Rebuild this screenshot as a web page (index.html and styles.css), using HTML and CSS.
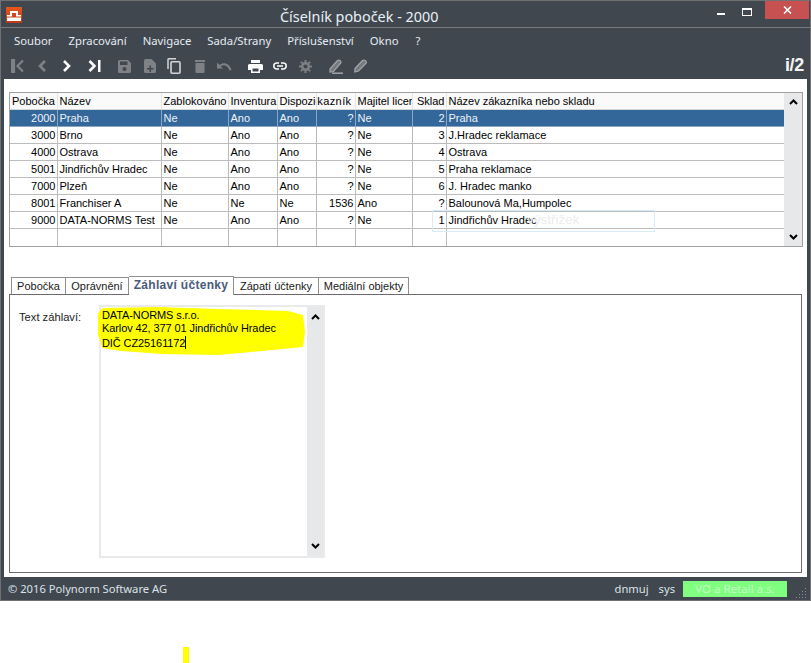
FILE: index.html
```html
<!DOCTYPE html>
<html lang="cs">
<head>
    <meta charset="UTF-8">
    <title>Číselník poboček - 2000</title>
    <link rel="stylesheet" href="styles.css">
</head>
<body>
    <div class="window">
        <div class="titlebar">
            <svg class="app-logo" width="16" height="16" viewBox="0 0 16 16">
                <defs>
                    <linearGradient id="logoFill" x1="0" y1="0" x2="0" y2="1">
                        <stop offset="0" stop-color="#e8561a"/>
                        <stop offset="1" stop-color="#b93c1a"/>
                    </linearGradient>
                </defs>
                <rect width="16" height="16" fill="url(#logoFill)"/>
                <path d="M4 4h8v4h3v1.500H10V6H6v3.500H1V8h3zM1 10.500h14V14H1z" fill="#fff"/>
            </svg>
            <div class="title">Číselník poboček - 2000</div>
            <div class="win-controls">
                <span class="win-min"></span>
                <span class="win-max"></span>
                <span class="win-close">
                    <svg width="9" height="8" viewBox="0 0 9 8"><path d="M1 0.500l7 7M8 0.500l-7 7" stroke="#fff" stroke-width="1.600"/></svg>
                </span>
            </div>
        </div>

        <div class="menubar">
            <span>Soubor</span>
            <span>Zpracování</span>
            <span>Navigace</span>
            <span>Sada/Strany</span>
            <span>Příslušenství</span>
            <span>Okno</span>
            <span class="menu-help">?</span>
        </div>

        <div class="toolbar">
            <svg class="tb-first" width="14" height="14" viewBox="0 0 14 14"><path d="M1 1h2v12H1zM12 1.500L6.500 7l5.500 5.500" fill="none" stroke="#7e8286" stroke-width="2.200"/></svg>
            <svg class="tb-prev" width="10" height="14" viewBox="0 0 10 14"><path d="M8 2L3 7l5 5" fill="none" stroke="#7e8286" stroke-width="2.600"/></svg>
            <svg class="tb-next" width="10" height="14" viewBox="0 0 10 14"><path d="M2 2l5 5-5 5" fill="none" stroke="#fff" stroke-width="2.600"/></svg>
            <svg class="tb-last" width="13" height="14" viewBox="0 0 13 14"><path d="M1.500 2L6.500 7l-5 5" fill="none" stroke="#fff" stroke-width="2.600"/><path d="M10 1h2.500v12H10z" fill="#fff"/></svg>
            <svg class="tb-save" width="13" height="13" viewBox="0 0 13 13"><path d="M0 1.500Q0 0 1.500 0H10l3 3v8.500q0 1.500-1.500 1.500h-10Q0 13 0 11.500zM2 1.500V5h7.500V1.500z" fill="#7e8286"/><circle cx="6.500" cy="9" r="2" fill="#41474e"/></svg>
            <svg class="tb-new" width="12" height="14" viewBox="0 0 12 14"><path d="M1.500 0H7.500L12 4.500v8q0 1.500-1.500 1.500h-9Q0 14 0 12.500V1.500Q0 0 1.500 0z" fill="#7e8286"/><path d="M5.500 6.500h1.500V9h2.500v1.500H7V13H5.500v-2.500H3V9h2.500z" fill="#41474e"/></svg>
            <svg class="tb-copy" width="14" height="16" viewBox="0 0 14 16"><path d="M1 11V1.500Q1 .8 1.700 .8H9" fill="none" stroke="#d3d5d7" stroke-width="1.500"/><rect x="4" y="3.800" width="9" height="11.400" rx="1" fill="none" stroke="#d3d5d7" stroke-width="1.600"/></svg>
            <svg class="tb-del" width="10" height="13" viewBox="0 0 10 13"><path d="M0 0h10v2H0zM.5 3h9v9q0 1-1 1h-7q-1 0-1-1z" fill="#7e8286"/></svg>
            <svg class="tb-undo" width="15" height="9" viewBox="0 0 15 9"><path d="M0 .5v6h6L3.600 4.200C6.500 2.300 10.500 3 12.500 8.500L14.500 8C12.500 1.500 7 -.5 2.400 2.900z" fill="#7e8286"/></svg>
            <svg class="tb-print" width="15" height="13" viewBox="0 0 15 13"><path d="M3 0h9v3H3zM1.500 4h12Q15 4 15 5.500V10h-3v3H3v-3H0V5.500Q0 4 1.500 4zM4.500 8.500v3h6v-3z" fill="#fff"/></svg>
            <svg class="tb-link" width="14" height="8" viewBox="0 0 14 8"><path d="M6 1H3.800a3 3 0 000 6H6M8 1h2.200a3 3 0 010 6H8M4 4h6" fill="none" stroke="#fff" stroke-width="1.500"/></svg>
            <svg class="tb-gear" width="13" height="13" viewBox="0 0 13 13"><circle cx="6.500" cy="6.500" r="3.300" fill="none" stroke="#7e8286" stroke-width="2.400"/><path d="M6.500 0v13M0 6.500h13M1.900 1.900l9.200 9.200M11.100 1.900l-9.200 9.200" stroke="#7e8286" stroke-width="2" stroke-dasharray="2 9"/></svg>
            <svg class="tb-edit1" width="14" height="15" viewBox="0 0 14 15"><path d="M1 10L8.500 1.500q1.200-1 2.500 0t.8 2.500L4.500 12.500 1 13z" fill="#757a7f" stroke="#a3a6a9" stroke-width="1.200"/><path d="M3 14.200h11" stroke="#a3a6a9" stroke-width="1.500"/></svg>
            <svg class="tb-edit2" width="14" height="14" viewBox="0 0 14 14"><path d="M1 9.500L8.500 1.500q1.300-1 2.800 0t.8 2.700L4.500 12 .8 13z" fill="#757a7f" stroke="#a3a6a9" stroke-width="1.200"/></svg>
            <span class="brand">i/2</span>
        </div>

        <div class="content">
            <div class="grid">
                <table class="grid-table">
                    <colgroup>
                        <col class="c-id"><col class="c-name"><col class="c-block"><col class="c-inv"><col class="c-disp"><col class="c-cust"><col class="c-owner"><col class="c-store"><col class="c-store-name">
                    </colgroup>
                    <thead>
                        <tr>
                            <th>Pobočka</th><th>Název</th><th>Zablokováno</th><th>Inventura</th><th>Dispozice</th>
                            <th class="clip-left">Zákazník</th><th>Majitel licence</th><th class="num">Sklad</th><th>Název zákazníka nebo skladu</th>
                        </tr>
                    </thead>
                    <tbody>
                        <tr class="selected"><td class="num">2000</td><td>Praha</td><td>Ne</td><td>Ano</td><td>Ano</td><td class="num">?</td><td>Ne</td><td class="num">2</td><td>Praha</td></tr>
                        <tr><td class="num">3000</td><td>Brno</td><td>Ne</td><td>Ano</td><td>Ano</td><td class="num">?</td><td>Ne</td><td class="num">3</td><td>J.Hradec reklamace</td></tr>
                        <tr><td class="num">4000</td><td>Ostrava</td><td>Ne</td><td>Ano</td><td>Ano</td><td class="num">?</td><td>Ne</td><td class="num">4</td><td>Ostrava</td></tr>
                        <tr><td class="num">5001</td><td>Jindřichův Hradec</td><td>Ne</td><td>Ano</td><td>Ano</td><td class="num">?</td><td>Ne</td><td class="num">5</td><td>Praha reklamace</td></tr>
                        <tr><td class="num">7000</td><td>Plzeň</td><td>Ne</td><td>Ano</td><td>Ano</td><td class="num">?</td><td>Ne</td><td class="num">6</td><td>J. Hradec manko</td></tr>
                        <tr><td class="num">8001</td><td>Franchiser A</td><td>Ne</td><td>Ne</td><td>Ne</td><td class="num">1536</td><td>Ano</td><td class="num">?</td><td>Balounová Ma,Humpolec</td></tr>
                        <tr><td class="num">9000</td><td>DATA-NORMS Test</td><td>Ne</td><td>Ano</td><td>Ano</td><td class="num">?</td><td>Ne</td><td class="num">1</td><td>Jindřichův Hradec</td></tr>
                        <tr class="empty-row"><td>&nbsp;</td><td></td><td></td><td></td><td></td><td></td><td></td><td></td><td></td></tr>
                    </tbody>
                </table>
                <div class="scrollbar grid-scroll">
                    <svg width="9" height="6" viewBox="0 0 9 6"><path d="M1 5l3.500-3.500L8 5" fill="none" stroke="#000" stroke-width="2"/></svg>
                    <svg width="9" height="6" viewBox="0 0 9 6"><path d="M1 1l3.500 3.500L8 1" fill="none" stroke="#000" stroke-width="2"/></svg>
                </div>
                <div class="snip-ghost">výstřižek</div>
            </div>

            <div class="tabs">
                <div class="tab t-branch">Pobočka</div>
                <div class="tab t-rights">Oprávnění</div>
                <div class="tab t-head active">Záhlaví účtenky</div>
                <div class="tab t-foot">Zápatí účtenky</div>
                <div class="tab t-media">Mediální objekty</div>
            </div>
            <div class="panel">
                <div class="field-label">Text záhlaví:</div>
                <div class="memo">
                    <svg class="marker" width="210" height="50" viewBox="0 0 210 50">
                        <path d="M5 1L60 0l60 2 70 2 15 4 2 17-2 15-52 5-33 3-55-1-42-3-19-3-2-9-5-9 1-9 1-7z" fill="#ffff00"/>
                    </svg>
                    <div class="memo-text">DATA-NORMS s.r.o.<br>Karlov 42, 377 01 Jindřichův Hradec<br>DIČ CZ25161172<span class="caret"></span></div>
                    <div class="scrollbar memo-scroll">
                        <svg width="9" height="6" viewBox="0 0 9 6"><path d="M1 5l3.500-3.500L8 5" fill="none" stroke="#000" stroke-width="2"/></svg>
                        <svg width="9" height="6" viewBox="0 0 9 6"><path d="M1 1l3.500 3.500L8 1" fill="none" stroke="#000" stroke-width="2"/></svg>
                    </div>
                </div>
            </div>
        </div>

        <div class="statusbar">
            <span class="copyright">© 2016 Polynorm Software AG</span>
            <span class="user">dnmuj</span>
            <span class="db">sys</span>
            <span class="company">VO a Retail a.s.</span>
            <svg class="grip" width="11" height="11" viewBox="0 0 11 11" fill="#8a8d91"><rect x="9" y="1" width="1" height="1"/><rect x="6" y="4" width="1" height="1"/><rect x="9" y="4" width="1" height="1"/><rect x="3" y="7" width="1" height="1"/><rect x="6" y="7" width="1" height="1"/><rect x="9" y="7" width="1" height="1"/><rect x="0" y="10" width="1" height="1"/><rect x="3" y="10" width="1" height="1"/><rect x="6" y="10" width="1" height="1"/><rect x="9" y="10" width="1" height="1"/></svg>
        </div>
    </div>
    <div class="stray-mark"></div>
</body>
</html>
```

FILE: styles.css
```css
html, body {
    margin: 0;
    padding: 0;
    background: #fff;
}
body {
    width: 811px;
    height: 663px;
    overflow: hidden;
    font-family: "Liberation Sans", Arial, sans-serif;
    font-size: 11px;
    color: #000;
}
svg {
    display: block;
    flex: none;
}
.window {
    box-sizing: border-box;
    width: 811px;
    height: 601px;
    border: 1px solid #6f7172;
    background: #41474e;
    display: flex;
    flex-direction: column;
}

/* title */
.titlebar {
    height: 26px;
    border-bottom: 1px solid #787b7e;
    display: flex;
    align-items: flex-start;
    position: relative;
}
.app-logo {
    margin: 6px 0 0 5px;
}
.title {
    position: absolute;
    left: 279px;
    top: 5px;
    font-family: "Noto Sans", sans-serif;
    font-size: 14.400px;
    line-height: 21px;
    color: #e8f0f8;
}
.win-controls {
    margin-left: auto;
    margin-right: 1px;
    display: flex;
}
.win-min {
    width: 8px;
    height: 2px;
    background: #fff;
    margin: 12px 17px 0 0;
}
.win-max {
    box-sizing: border-box;
    width: 10px;
    height: 8px;
    border: 1px solid #fff;
    border-top-width: 2px;
    margin: 7px 13px 0 0;
}
.win-close {
    width: 44px;
    height: 18px;
    background: #c75050;
    display: flex;
    align-items: center;
    justify-content: center;
}

/* menu */
.menubar {
    height: 25px;
    padding-bottom: 2px;
    display: flex;
    align-items: center;
    padding-left: 13px;
    gap: 16px;
    font-family: "Noto Sans", sans-serif;
    font-size: 11.300px;
    color: #e4ecf4;
}
.menu-help {
    margin-left: 1px;
}

/* toolbar */
.toolbar {
    height: 22px;
    padding-bottom: 2px;
    display: flex;
    align-items: center;
}
.tb-first { margin-left: 10px; }
.tb-prev { margin-left: 12px; }
.tb-next { margin-left: 15px; }
.tb-last { margin-left: 16px; }
.tb-save { margin-left: 17px; }
.tb-new { margin-left: 13px; }
.tb-copy { margin-left: 11px; }
.tb-del { margin-left: 14px; }
.tb-undo { margin-left: 12px; }
.tb-print { margin-left: 16px; }
.tb-link { margin-left: 10px; }
.tb-gear { margin-left: 12px; }
.tb-edit1 { margin-left: 17px; }
.tb-edit2 { margin-left: 11px; }
.brand {
    margin: 0 6px 2px auto;
    font-weight: bold;
    font-size: 18px;
    line-height: 18px;
    letter-spacing: -0.300px;
    color: #f4f4f4;
}

/* content */
.content {
    width: 803px;
    height: 498px;
    margin-left: 3px;
    background: #fff;
    box-sizing: border-box;
    padding: 13px 5px 0 5px;
}
.grid {
    box-sizing: border-box;
    position: relative;
    width: 794px;
    height: 155px;
    border: 1px solid #a0a0a0;
    display: flex;
    align-items: flex-start;
}
.grid-table {
    table-layout: fixed;
    border-collapse: collapse;
    width: 774px;
}
.c-id { width: 47px; }
.c-name { width: 104px; }
.c-block { width: 67px; }
.c-inv { width: 49px; }
.c-disp { width: 39px; }
.c-cust { width: 39px; }
.c-owner { width: 57px; }
.c-store { width: 34px; }
.grid-table th,
.grid-table td {
    height: 16px;
    padding: 0 1px 0 2px;
    border: 1px solid #bcbcbc;
    border-top: 0;
    font-weight: normal;
    font-size: 11px;
    line-height: 16px;
    text-align: left;
    white-space: nowrap;
    overflow: hidden;
}
.grid-table th {
    background: #fafafa;
    border-color: #e6e6e6;
    border-bottom-color: #d6d6d6;
}
.grid-table th:first-child,
.grid-table td:first-child {
    border-left: 0;
}
.grid-table th:last-child,
.grid-table td:last-child {
    border-right: 0;
}
.grid-table .empty-row td {
    height: 17px;
    border-bottom: 0;
}
.grid-table .num {
    text-align: right;
}
.grid-table th.clip-left {
    text-align: right;
    padding: 0 3px 0 0;
    direction: rtl;
    letter-spacing: 0.400px;
}
.grid-table tr.selected td {
    background: #336699;
    color: #eef3f8;
    border-color: #8aa6c2;
    border-top: 0;
}
.scrollbar {
    display: flex;
    flex-direction: column;
    justify-content: space-between;
    align-items: center;
    box-sizing: border-box;
    background: #e6e8ea;
}
.grid-scroll {
    width: 18px;
    height: 153px;
    padding: 6px 0 6px;
}
.snip-ghost {
    position: absolute;
    left: 422px;
    top: 117px;
    box-sizing: border-box;
    width: 223px;
    height: 22px;
    border: 1px solid #d8ecf8;
    padding-left: 94px;
    font-size: 13.500px;
    line-height: 18px;
    color: #ececec;
}

/* tabs */
.tabs {
    display: flex;
    height: 17px;
    margin-top: 30px;
    padding-left: 2px;
    position: relative;
}
.tab {
    box-sizing: border-box;
    height: 17px;
    border: 1px solid #8e8e8e;
    border-left: 0;
    border-bottom: 0;
    text-align: center;
    font-size: 11px;
    line-height: 16px;
    color: #1a1a1a;
    background: #fff;
}
.t-branch { width: 55px; border-left: 1px solid #8e8e8e; }
.t-rights { width: 63px; }
.t-head { width: 105px; }
.t-foot { width: 85px; }
.t-media { width: 90px; }
.tab.active {
    height: 19px;
    margin-top: -1px;
    position: relative;
    font-size: 12px;
    font-weight: bold;
    letter-spacing: 0.300px;
    line-height: 17px;
    color: #4a5a7a;
}
.panel {
    box-sizing: border-box;
    width: 793px;
    height: 279px;
    border: 1px solid #6e6a6e;
    display: flex;
    align-items: flex-start;
    padding: 10px 0 0 9px;
}
.field-label {
    width: 80px;
    padding-top: 5px;
    font-size: 11.200px;
    line-height: 14px;
    color: #222;
}
.memo {
    box-sizing: border-box;
    position: relative;
    width: 226px;
    height: 253px;
    border: 2px solid #e8eaec;
    display: flex;
    justify-content: flex-end;
}
.marker {
    position: absolute;
    left: -3px;
    top: 0;
}
.memo-text {
    position: absolute;
    left: 1px;
    top: 2px;
    font-size: 11px;
    letter-spacing: -0.100px;
    line-height: 13.300px;
    white-space: nowrap;
}
.caret {
    display: inline-block;
    width: 1px;
    height: 13px;
    background: #000;
    vertical-align: -2px;
}
.memo-scroll {
    width: 16px;
    height: 249px;
    padding: 7px 0 7px;
}

/* status */
.statusbar {
    flex: 1;
    display: flex;
    align-items: center;
    padding-left: 7px;
    font-family: "Noto Sans", sans-serif;
    font-size: 11.200px;
    color: #dbe3ea;
}
.user { margin-left: auto; }
.db { margin-left: 10px; }
.company {
    box-sizing: border-box;
    width: 104px;
    height: 16px;
    margin-left: 8px;
    background: #80ff80;
    color: #c4ffc4;
    font-size: 11.500px;
    text-align: center;
    line-height: 16px;
}
.grip {
    margin: 8px 3px 0 9px;
}
.stray-mark {
    width: 6px;
    height: 16px;
    margin: 46px 0 0 183px;
    background: #ffff00;
}
```
